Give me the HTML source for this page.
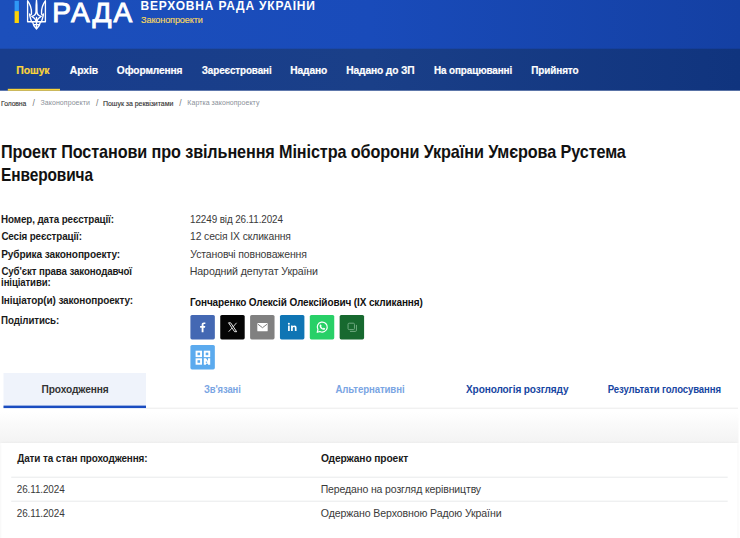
<!DOCTYPE html>
<html lang="uk">
<head>
<meta charset="utf-8">
<title>Картка законопроекту</title>
<style>
*{box-sizing:border-box;margin:0;padding:0}
html,body{width:740px;height:538px;overflow:hidden;background:#fff}
body{font-family:"Liberation Sans",sans-serif;color:#111;position:relative}
.t{position:absolute;left:0;top:0;white-space:nowrap;line-height:1;transform-origin:0 0}
#bg{position:absolute;left:0;top:0}
</style>
</head>
<body>
<svg id="bg" width="740" height="538" viewBox="0 0 740 538">
<defs>
 <linearGradient id="g1" x1="0" x2="1" y1="0" y2="0"><stop offset="0" stop-color="#1c4fbb"/><stop offset=".5" stop-color="#194bba"/><stop offset="1" stop-color="#1440a3"/></linearGradient>
 <linearGradient id="g2" x1="0" x2="1" y1="0" y2="0"><stop offset="0" stop-color="#183d8d"/><stop offset=".5" stop-color="#1a3f88"/><stop offset="1" stop-color="#10347e"/></linearGradient>
 <linearGradient id="g3" x1="0" x2="0" y1="0" y2="1"><stop offset="0" stop-color="#fff"/><stop offset=".3" stop-color="#fbfbfb"/><stop offset="1" stop-color="#f3f3f3"/></linearGradient>
 <filter id="sh" x="-5%" y="-20%" width="110%" height="140%"><feGaussianBlur stdDeviation="1.6"/></filter>
</defs>
<rect x="0" y="0" width="740" height="49" fill="url(#g1)"/>
<rect x="0" y="48.7" width="740" height="42" fill="url(#g2)"/>
<rect x="7.8" y="88.8" width="52.2" height="1.9" fill="#fbd53a"/>
<rect x="14.6" y="0.8" width="4.3" height="10.3" fill="#2f98f6"/>
<rect x="14.6" y="11.1" width="4.3" height="11.9" fill="#fcd307"/>
<g transform="translate(26,0)" fill="none" stroke="#fff" stroke-width="1.35" stroke-linejoin="round" stroke-linecap="round">
  <path d="M1.6 1 L1.6 21.7 L19.4 21.7 L19.4 1"/>
  <path d="M1.6 1 C4.2 4.2 5.7 8 5.5 13.6 C5.4 15.4 3.6 15.6 3.6 14 M3.7 15.4 C4.2 17.6 4.8 19.6 5.6 21.7"/>
  <path d="M19.4 1 C16.8 4.2 15.3 8 15.5 13.6 C15.6 15.4 17.4 15.6 17.4 14 M17.3 15.4 C16.8 17.6 16.2 19.6 15.4 21.7"/>
  <path d="M10.5 0.2 C10.1 3.5 10 7 10 11.5 C10 14.2 8.6 15.8 5.8 16.4 C7.8 17.4 9.7 19.2 10.5 21.7 C11.3 19.2 13.2 17.4 15.2 16.4 C12.4 15.8 11 14.2 11 11.5 C11 7 10.9 3.5 10.5 0.2 Z"/>
  <path d="M6.6 21.9 C7 25 8.6 27.3 10.5 29 C12.4 27.3 14 25 14.4 21.9 M10.5 17.5 L10.5 28.4 M7.6 24.6 L13.4 24.6"/>
</g>
<rect x="3.5" y="373" width="142.5" height="35" fill="#eff3fb"/>
<rect x="3.5" y="405.6" width="142.5" height="2.5" fill="#1a4cc0"/>
<rect x="146" y="407.7" width="592" height="1" fill="#ececec"/>
<rect x="0" y="412" width="738.5" height="31.2" fill="url(#g3)"/>
<rect x="1.2" y="443.4" width="736.3" height="100" fill="#000" opacity=".07" filter="url(#sh)"/>
<rect x="1.2" y="443.0" width="736.3" height="96" fill="#fff"/>
<rect x="11.2" y="476.7" width="716.5" height="1" fill="#e8eaec"/>
<rect x="11.2" y="500.7" width="716.5" height="1" fill="#e8eaec"/>
<g transform="translate(190.40,315.00)"><rect width="24.45" height="24.45" rx="1.6" fill="#4468b3"/><path fill="#fff" d="M13.1 17.2v-4.4h1.5l.25-1.8H13.1v-1.1c0-.5.15-.85.9-.85h.95V7.45c-.17-.02-.73-.07-1.4-.07-1.4 0-2.3.85-2.3 2.4V11H9.7v1.8h1.55v4.4z"/></g>
<g transform="translate(220.25,315.00)"><rect width="24.45" height="24.45" rx="1.6" fill="#050505"/><g fill="none" stroke="#fff" stroke-width=".9"><path d="M8.3 7.8h2.1l6 8.9h-2.1z"/><path d="M16.3 7.8l-3.6 4.2M11.8 13l-3.4 3.7" stroke-width=".8"/></g></g>
<g transform="translate(250.10,315.00)"><rect width="24.45" height="24.45" rx="1.6" fill="#808080"/><rect x="7.2" y="8.1" width="10.4" height="8.2" rx=".9" fill="#fff"/><path d="M7.8 9.2l4.6 3.5 4.6-3.5" fill="none" stroke="#808080" stroke-width="1"/></g>
<g transform="translate(279.95,315.00)"><rect width="24.45" height="24.45" rx="1.6" fill="#0f75b4"/><g fill="#fff"><rect x="8.1" y="10.6" width="1.7" height="5.4"/><circle cx="8.95" cy="8.7" r="1"/><path d="M11.1 10.6h1.6v.75c.3-.5.95-.9 1.85-.9 1.6 0 2.05 1 2.05 2.500000000000001V16h-1.7v-2.7c0-.7-.1-1.35-.9-1.35s-1.2.6-1.2 1.35V16h-1.7z"/></g></g>
<g transform="translate(309.80,315.00)"><rect width="24.45" height="24.45" rx="1.6" fill="#28d067"/><path d="M7.4 17.3l.75-2.7a5 5 0 1 1 1.9 1.85z" fill="none" stroke="#fff" stroke-width="1.2" stroke-linejoin="round"/><path fill="#fff" d="M10.6 9.6c.2-.2.55-.15.65.05l.5 1.1c.05.15 0 .3-.1.45l-.35.4c.4.8 1 1.4 1.85 1.8l.45-.5c.12-.12.3-.15.45-.08l1.05.5c.2.1.25.35.15.6-.3.8-1 1.05-1.8.9-1.9-.4-3.3-1.85-3.65-3.6-.1-.65.2-1.2.8-1.62z"/></g>
<g transform="translate(339.65,315.00)"><rect width="24.45" height="24.45" rx="1.6" fill="#17692f"/><g fill="none" stroke="#6fa980" stroke-width="1"><rect x="8.4" y="8.2" width="6.4" height="6.4" rx="1.1"/><path d="M10.3 16.4h5.4a1.1 1.1 0 0 0 1.1-1.1V9.9"/></g></g>
<g transform="translate(190.40,345.00)"><rect width="24.45" height="24.45" rx="1.6" fill="#5baaee"/><g fill="none" stroke="#fff" stroke-width="1.9"><rect x="6.15" y="6.65" width="4.5" height="4.5"/><rect x="14.35" y="6.65" width="4.5" height="4.5"/><rect x="6.15" y="14.25" width="4.5" height="4.5"/></g><path fill="#fff" d="M13.4 13.3h2.2l2 2.6v-2.6h2.2v6.4h-2.2v-1h-2v1h-2.2z"/><path fill="#5baaee" d="M15.4 16.6h1.3v1.2h-1.3z"/></g>
</svg>
<header>
<div class="t" id="rada" style="transform:translate(52.14px,-1.40px);font-size:28px;font-weight:normal;color:#fff;letter-spacing:2.016px;-webkit-text-stroke:0.95px #fff;">РАДА</div>
<div class="t" id="vru" style="transform:translate(140.57px,0.44px);font-size:12px;font-weight:bold;color:#fff;letter-spacing:0.805px;">ВЕРХОВНА РАДА УКРАЇНИ</div>
<div class="t" id="zp" style="transform:translate(141.10px,16.38px) scaleX(1.0093);font-size:9px;font-weight:normal;color:#f6d860;letter-spacing:-0.120px;-webkit-text-stroke:0.15px #f6d860;">Законопроекти</div>
</header>
<nav>
<div class="t" id="n1" style="transform:translate(16.37px,65.27px) scaleX(0.9095);font-size:11.5px;font-weight:bold;color:#fbd53a;letter-spacing:-0.120px;-webkit-text-stroke:0.2px #fbd53a;">Пошук</div>
<div class="t" id="n2" style="transform:translate(69.87px,65.27px) scaleX(0.8998);font-size:11.5px;font-weight:bold;color:#fff;letter-spacing:-0.120px;-webkit-text-stroke:0.2px #fff;">Архів</div>
<div class="t" id="n3" style="transform:translate(116.86px,65.27px) scaleX(0.8836);font-size:11.5px;font-weight:bold;color:#fff;letter-spacing:-0.120px;-webkit-text-stroke:0.2px #fff;">Оформлення</div>
<div class="t" id="n4" style="transform:translate(201.76px,65.27px) scaleX(0.8584);font-size:11.5px;font-weight:bold;color:#fff;letter-spacing:-0.120px;-webkit-text-stroke:0.2px #fff;">Зареєстровані</div>
<div class="t" id="n5" style="transform:translate(290.29px,65.27px) scaleX(0.8866);font-size:11.5px;font-weight:bold;color:#fff;letter-spacing:-0.120px;-webkit-text-stroke:0.2px #fff;">Надано</div>
<div class="t" id="n6" style="transform:translate(346.20px,65.27px) scaleX(0.8866);font-size:11.5px;font-weight:bold;color:#fff;letter-spacing:-0.120px;-webkit-text-stroke:0.2px #fff;">Надано до ЗП</div>
<div class="t" id="n7" style="transform:translate(433.92px,65.27px) scaleX(0.8601);font-size:11.5px;font-weight:bold;color:#fff;letter-spacing:-0.120px;-webkit-text-stroke:0.2px #fff;">На опрацюванні</div>
<div class="t" id="n8" style="transform:translate(531.22px,65.27px) scaleX(0.8642);font-size:11.5px;font-weight:bold;color:#fff;letter-spacing:-0.120px;-webkit-text-stroke:0.2px #fff;">Прийнято</div>
</nav>
<nav>
<div class="t" id="b1" style="transform:translate(1.11px,100.07px) scaleX(0.9695);font-size:7px;font-weight:normal;color:#333;letter-spacing:-0.120px;-webkit-text-stroke:0.12px #333;">Головна</div>
<div class="t" id="b1s" style="transform:translate(32.60px,99.40px);font-size:8.5px;font-weight:normal;color:#777;">/</div>
<div class="t" id="b2" style="transform:translate(40.45px,99.07px);font-size:7px;font-weight:normal;color:#8a8f98;letter-spacing:0.075px;">Законопроекти</div>
<div class="t" id="b2s" style="transform:translate(96.11px,99.40px);font-size:8.5px;font-weight:normal;color:#777;">/</div>
<div class="t" id="b3" style="transform:translate(103.01px,100.07px);font-size:7px;font-weight:normal;color:#333;letter-spacing:-0.040px;-webkit-text-stroke:0.12px #333;">Пошук за реквізитами</div>
<div class="t" id="b3s" style="transform:translate(179.37px,99.40px);font-size:8.5px;font-weight:normal;color:#777;">/</div>
<div class="t" id="b4" style="transform:translate(187.34px,99.07px);font-size:7px;font-weight:normal;color:#8a8f98;letter-spacing:0.044px;">Картка законопроекту</div>
</nav>
<main>
<h1 style="font-size:inherit;font-weight:inherit"><span class="t" id="h1a" style="transform:translate(0.99px,144.13px) scaleX(0.9113);font-size:17.8px;font-weight:bold;color:#111;letter-spacing:-0.120px;">Проект Постанови про звільнення Міністра оборони України Умєрова Рустема</span>
<span class="t" id="h1b" style="transform:translate(1.06px,166.73px) scaleX(0.8687);font-size:17.8px;font-weight:bold;color:#111;letter-spacing:-0.120px;">Енверовича</span></h1>
<section class="info">
<div class="t" id="l1" style="transform:translate(1.10px,213.69px) scaleX(0.8927);font-size:11px;font-weight:bold;color:#1a1a1a;letter-spacing:-0.120px;">Номер, дата реєстрації:</div>
<div class="t" id="l2" style="transform:translate(1.38px,230.69px) scaleX(0.8907);font-size:11px;font-weight:bold;color:#1a1a1a;letter-spacing:-0.120px;">Сесія реєстрації:</div>
<div class="t" id="l3" style="transform:translate(1.19px,248.69px) scaleX(0.9172);font-size:11px;font-weight:bold;color:#1a1a1a;letter-spacing:-0.120px;">Рубрика законопроекту:</div>
<div class="t" id="l4" style="transform:translate(1.38px,265.69px) scaleX(0.8822);font-size:11px;font-weight:bold;color:#1a1a1a;letter-spacing:-0.120px;">Суб'єкт права законодавчої</div>
<div class="t" id="l4b" style="transform:translate(1.06px,276.69px) scaleX(0.8736);font-size:11px;font-weight:bold;color:#1a1a1a;letter-spacing:-0.120px;">ініціативи:</div>
<div class="t" id="l5" style="transform:translate(1.19px,294.69px) scaleX(0.9086);font-size:11px;font-weight:bold;color:#1a1a1a;letter-spacing:-0.120px;">Ініціатор(и) законопроекту:</div>
<div class="t" id="l6" style="transform:translate(1.12px,314.69px) scaleX(0.8832);font-size:11px;font-weight:bold;color:#1a1a1a;letter-spacing:-0.120px;">Поділитись:</div>
<div class="t" id="v1" style="transform:translate(190.06px,213.69px) scaleX(0.8989);font-size:11px;font-weight:normal;color:#3a3a3a;letter-spacing:-0.120px;">12249 від 26.11.2024</div>
<div class="t" id="v2" style="transform:translate(189.99px,230.69px) scaleX(0.9422);font-size:11px;font-weight:normal;color:#3a3a3a;letter-spacing:-0.120px;">12 сесія IX скликання</div>
<div class="t" id="v3" style="transform:translate(190.30px,248.69px) scaleX(0.9517);font-size:11px;font-weight:normal;color:#3a3a3a;letter-spacing:-0.120px;">Установчі повноваження</div>
<div class="t" id="v4" style="transform:translate(189.77px,265.69px) scaleX(0.9656);font-size:11px;font-weight:normal;color:#3a3a3a;letter-spacing:-0.120px;">Народний депутат України</div>
<div class="t" id="v5" style="transform:translate(189.93px,297.11px) scaleX(0.9518);font-size:10.5px;font-weight:bold;color:#111;letter-spacing:-0.120px;">Гончаренко Олексій Олексійович (IX скликання)</div>
</section>
<section class="tabs">
<div class="t" id="t1" style="transform:translate(41.59px,384.11px) scaleX(0.9666);font-size:10.5px;font-weight:bold;color:#333;letter-spacing:-0.120px;">Проходження</div>
<div class="t" id="t2" style="transform:translate(203.97px,384.11px) scaleX(0.8976);font-size:10.5px;font-weight:bold;color:#7aa5e3;letter-spacing:-0.120px;">Зв'язані</div>
<div class="t" id="t3" style="transform:translate(335.48px,384.11px) scaleX(0.9184);font-size:10.5px;font-weight:bold;color:#7aa5e3;letter-spacing:-0.120px;">Альтернативні</div>
<div class="t" id="t4" style="transform:translate(466.01px,384.11px) scaleX(0.9589);font-size:10.5px;font-weight:bold;color:#1746a2;letter-spacing:-0.120px;">Хронологія розгляду</div>
<div class="t" id="t5" style="transform:translate(607.75px,384.11px) scaleX(0.9114);font-size:10.5px;font-weight:bold;color:#1746a2;letter-spacing:-0.120px;">Результати голосування</div>
</section>
<section class="passing">
<div class="t" id="th1" style="transform:translate(17.23px,452.69px) scaleX(0.9021);font-size:11px;font-weight:bold;color:#1a1a1a;letter-spacing:-0.120px;">Дати та стан проходження:</div>
<div class="t" id="th2" style="transform:translate(320.99px,452.69px) scaleX(0.9290);font-size:11px;font-weight:bold;color:#1a1a1a;letter-spacing:-0.120px;">Одержано проект</div>
<div class="t" id="d1" style="transform:translate(16.80px,483.69px) scaleX(0.9007);font-size:11px;font-weight:normal;color:#3a3a3a;letter-spacing:-0.120px;">26.11.2024</div>
<div class="t" id="d2" style="transform:translate(16.80px,507.69px) scaleX(0.9007);font-size:11px;font-weight:normal;color:#3a3a3a;letter-spacing:-0.120px;">26.11.2024</div>
<div class="t" id="e1" style="transform:translate(320.68px,483.69px) scaleX(0.9530);font-size:11px;font-weight:normal;color:#3a3a3a;letter-spacing:-0.120px;">Передано на розгляд керівництву</div>
<div class="t" id="e2" style="transform:translate(320.84px,507.69px) scaleX(0.9611);font-size:11px;font-weight:normal;color:#3a3a3a;letter-spacing:-0.120px;">Одержано Верховною Радою України</div>
</section>
</main>
</body>
</html>
